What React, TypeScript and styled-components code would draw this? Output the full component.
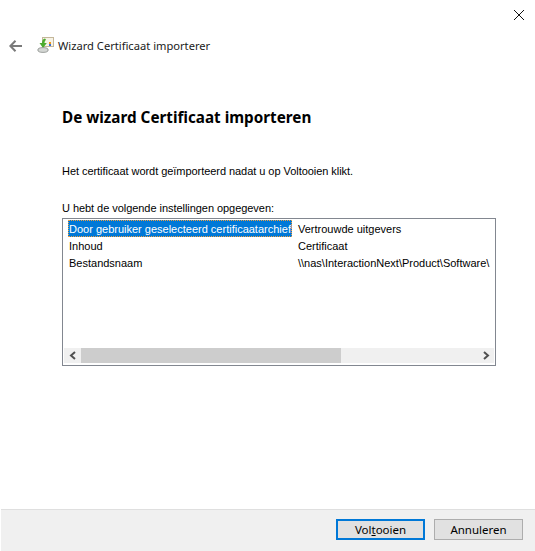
import styled, { createGlobalStyle } from "styled-components";

const GlobalStyle = createGlobalStyle`
  html, body {
    margin: 0;
    padding: 0;
    background: #fff;
  }
  body {
    font-family: "Liberation Sans", Arial, sans-serif;
    font-size: 11px;
    color: #000;
  }
`;

const Window = styled.div`
  width: 535px;
  height: 551px;
  display: flex;
  flex-direction: column;
  background: #fff;
  overflow: hidden;
`;

const TitleBar = styled.div`
  height: 30px;
  display: flex;
  justify-content: flex-end;
  align-items: center;
  padding-right: 10px;
`;

const CloseButton = styled.svg`
  width: 12px;
  height: 12px;
`;

const NavRow = styled.div`
  height: 32px;
  display: flex;
  align-items: center;
  padding-left: 9px;
`;

const BackIcon = styled.svg`
  width: 13px;
  height: 12px;
  margin-right: 15px;
`;

const WizardIcon = styled.svg`
  width: 17px;
  height: 16px;
  margin-right: 4px;
  margin-bottom: 2px;
`;

const WizardTitle = styled.span`
  font-family: "Noto Sans", sans-serif;
  font-size: 11.15px;
  color: #1a1a1a;
  padding-bottom: 2px;
`;

const Content = styled.div`
  flex: 1;
  display: flex;
  flex-direction: column;
  padding: 0 39px 0 62px;
`;

const Heading = styled.h1`
  margin: 44px 0 0;
  height: 22px;
  line-height: 22px;
  font-family: "Noto Sans", sans-serif;
  font-size: 15.25px;
  font-weight: 700;
  color: #000;
  white-space: nowrap;
`;

const Paragraph = styled.p<{ $top: number }>`
  margin: ${({ $top }) => $top}px 0 0;
  height: 16px;
  line-height: 16px;
  letter-spacing: -0.05px;
  white-space: nowrap;
`;

const ListBox = styled.div`
  width: 434px;
  height: 148px;
  box-sizing: border-box;
  margin-top: 2px;
  border: 1px solid #828790;
  display: flex;
  flex-direction: column;
  padding: 1px 1px 2px;
`;

const Rows = styled.div`
  flex: 1;
  overflow: hidden;
  padding-left: 4px;
`;

const Row = styled.div`
  display: grid;
  grid-template-columns: 224px 1fr;
  column-gap: 5px;
  height: 17px;
  line-height: 18px;
  white-space: nowrap;
`;

const Cell = styled.div<{ $selected?: boolean }>`
  height: 17px;
  overflow: hidden;
  padding-left: 1px;
  background: ${({ $selected }) => ($selected ? "#0078d7" : "transparent")};
  color: ${({ $selected }) => ($selected ? "#fff" : "#000")};
  outline: ${({ $selected }) => ($selected ? "1px dotted #f0a040" : "none")};
  outline-offset: -1px;
`;

const ScrollBar = styled.div`
  height: 15px;
  display: flex;
  background: #f0f0f0;
`;

const ScrollArrow = styled.div`
  width: 17px;
  display: flex;
  align-items: center;
  justify-content: center;
`;

const ScrollTrack = styled.div`
  flex: 1;
  display: flex;
`;

const ScrollThumb = styled.div`
  width: 260px;
  background: #cdcdcd;
`;

const Footer = styled.div`
  height: 42px;
  box-sizing: border-box;
  margin-left: 1px;
  border-top: 1px solid #dfdfdf;
  background: #f0f0f0;
  display: flex;
  justify-content: flex-end;
  align-items: flex-start;
  gap: 9px;
  padding: 9px 12px 0 0;
`;

const Button = styled.button<{ $primary?: boolean }>`
  width: 89px;
  height: 21px;
  box-sizing: border-box;
  padding: 0;
  font-family: "Noto Sans", sans-serif;
  font-size: 11.5px;
  line-height: 15px;
  color: #000;
  background: #e1e1e1;
  border: ${({ $primary }) => ($primary ? "2px solid #0078d7" : "1px solid #adadad")};
`;

const rows = [
  { name: "Door gebruiker geselecteerd certificaatarchief", value: "Vertrouwde uitgevers" },
  { name: "Inhoud", value: "Certificaat" },
  { name: "Bestandsnaam", value: "\\\\nas\\InteractionNext\\Product\\Software\\" },
];

export default function App() {
  return (
    <Window>
      <GlobalStyle />
      <TitleBar>
        <CloseButton viewBox="0 0 12 12">
          <path d="M1 1l10 10M11 1L1 11" stroke="#111" strokeWidth="1" fill="none" />
        </CloseButton>
      </TitleBar>
      <NavRow>
        <BackIcon viewBox="0 0 13 12">
          <path d="M6.5 0.8L1.4 6l5.1 5.2M1.6 6H13" stroke="#7a7a7a" strokeWidth="2" fill="none" />
        </BackIcon>
        <WizardIcon viewBox="0 0 17 16">
          <rect x="5.5" y="0.5" width="11" height="9" fill="#f7f3e6" stroke="#c4b79a" />
          <rect x="12" y="5" width="2" height="2" fill="#f09a1a" />
          <rect x="12" y="7" width="2" height="2" fill="#3b6fd1" />
          <path d="M8 1.5c-2 .5-3 2-3 4.5H2.500l3.500 5 3.800-5H7.500c0-1.500.5-2.500 1.500-3.300z" fill="#4bab2e" />
          <ellipse cx="6" cy="13" rx="5.2" ry="2.4" fill="#d4d7d4" stroke="#7d817d" strokeWidth="0.7" />
        </WizardIcon>
        <WizardTitle>Wizard Certificaat importerer</WizardTitle>
      </NavRow>
      <Content>
        <Heading>De wizard Certificaat importeren</Heading>
        <Paragraph $top={35}>Het certificaat wordt geïmporteerd nadat u op Voltooien klikt.</Paragraph>
        <Paragraph $top={21}>U hebt de volgende instellingen opgegeven:</Paragraph>
        <ListBox>
          <Rows>
            {rows.map((row, i) => (
              <Row key={row.name}>
                <Cell $selected={i === 0}>{row.name}</Cell>
                <Cell>{row.value}</Cell>
              </Row>
            ))}
          </Rows>
          <ScrollBar>
            <ScrollArrow>
              <svg width="8" height="9" viewBox="0 0 8 9">
                <path d="M6 1L2 4.5 6 8" stroke="#505050" strokeWidth="2" fill="none" />
              </svg>
            </ScrollArrow>
            <ScrollTrack>
              <ScrollThumb />
            </ScrollTrack>
            <ScrollArrow>
              <svg width="8" height="9" viewBox="0 0 8 9">
                <path d="M2 1l4 3.5L2 8" stroke="#505050" strokeWidth="2" fill="none" />
              </svg>
            </ScrollArrow>
          </ScrollBar>
        </ListBox>
      </Content>
      <Footer>
        <Button $primary>
          Vol<u>t</u>ooien
        </Button>
        <Button>Annuleren</Button>
      </Footer>
    </Window>
  );
}
